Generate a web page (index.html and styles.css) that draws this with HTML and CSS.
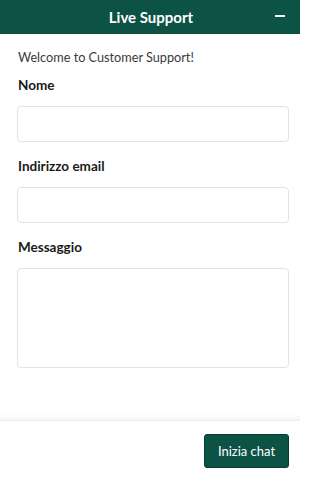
FILE: index.html
```html
<!DOCTYPE html>
<html lang="it">
<head>
<meta charset="utf-8">
<title>Live Support</title>
<link rel="stylesheet" href="styles.css">
</head>
<body>
<div class="widget">
  <header class="head">
    <span class="title">Live Support</span>
    <button class="min" aria-label="Minimize"><span class="bar"></span></button>
  </header>
  <main class="body">
    <p class="welcome">Welcome to Customer Support!</p>
    <label class="lbl">Nome</label>
    <input class="field" type="text">
    <label class="lbl">Indirizzo email</label>
    <input class="field" type="email">
    <label class="lbl">Messaggio</label>
    <textarea class="field area"></textarea>
  </main>
  <footer class="foot">
    <button class="start">Inizia chat</button>
  </footer>
</div>
</body>
</html>
```
FILE: styles.css
```css
* { box-sizing: border-box; }
html, body { margin: 0; padding: 0; height: 100%; overflow: hidden; }
body {
  font-family: Lato, "Open Sans", sans-serif;
  color: #222;
  background: #fff;
}
.widget {
  display: flex;
  flex-direction: column;
  height: 478px;
  width: 300px;
}
.head {
  flex: 0 0 34px;
  background: #0c5346;
  color: #fff;
  display: flex;
  align-items: center;
  justify-content: center;
  position: relative;
}
.title {
  font-weight: 700;
  font-size: 15px;
  margin: -1px 0 0 2px;
}
.min {
  position: absolute;
  right: 10px;
  top: 6px;
  width: 20px;
  height: 20px;
  border: 0;
  padding: 0;
  background: transparent;
  display: flex;
  align-items: center;
  justify-content: center;
}
.bar {
  width: 10px;
  height: 2px;
  background: #fff;
}
.body {
  flex: 1;
  padding: 13px 11px 0 17px;
  display: flex;
  flex-direction: column;
  box-shadow: inset 0 -8px 8px -8px rgba(0,0,0,0.08);
}
.welcome {
  margin: 0 0 0 1px;
  font-size: 12.7px;
  line-height: 20px;
  color: #3a3a3a;
}
.lbl {
  margin: 9px 0 0 1px;
  font-size: 13.5px;
  font-weight: 700;
  line-height: 18px;
  color: #1a1a1a;
}
.field {
  display: block;
  margin-top: 12px;
  height: 36px;
  width: 272px;
  border: 1px solid #e2e2e2;
  border-radius: 4px;
  background: #fff;
  font: inherit;
  outline: none;
}
.field + .lbl { margin-top: 15px; }
.area {
  height: 100px;
  resize: none;
}
.foot {
  flex: 0 0 58px;
  border-top: 1px solid #eaeaea;
  display: flex;
  align-items: center;
  justify-content: flex-end;
  padding: 0 11px 0 0;
}
.start {
  height: 34px;
  width: 85px;
  background: #0c5346;
  color: #fff;
  border: 1px solid #083c33;
  border-radius: 3px;
  font-family: inherit;
  font-size: 13px;
  padding: 0;
  margin-top: 2px;
}
```
